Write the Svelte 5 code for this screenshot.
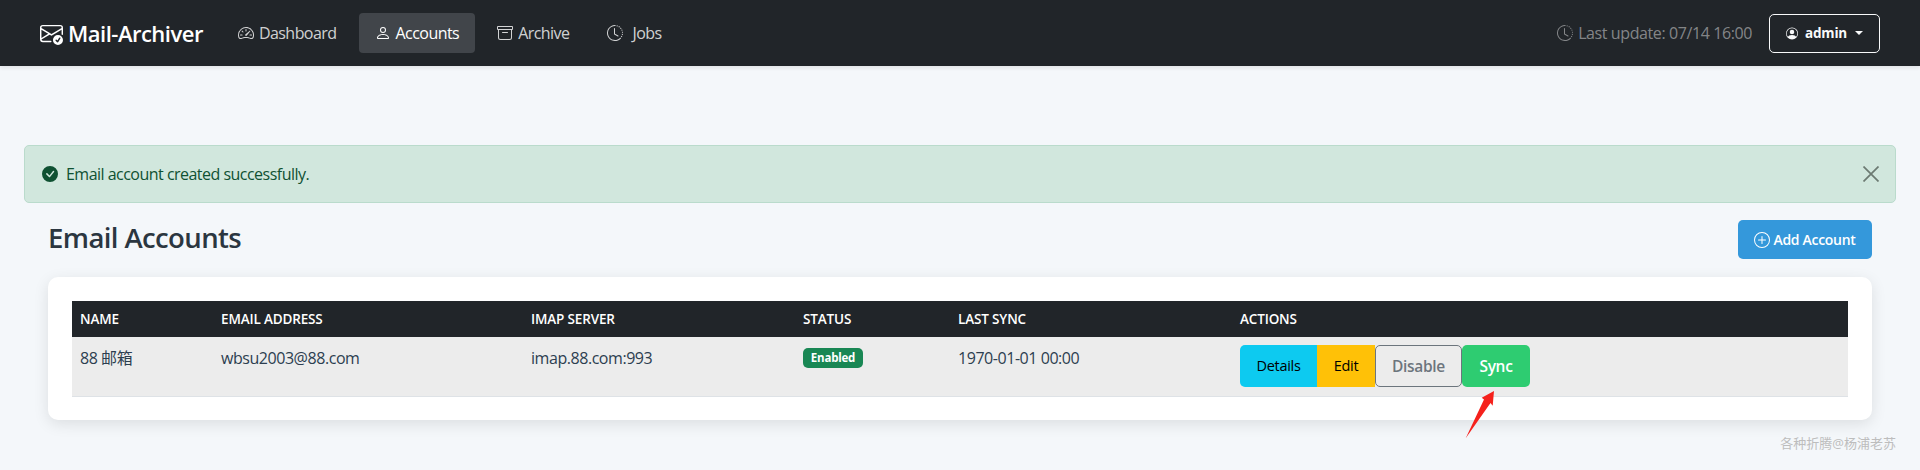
<script>
  const navItems = [
    { label: 'Dashboard', icon: 'speedometer' },
    { label: 'Accounts', icon: 'person', active: true },
    { label: 'Archive', icon: 'archive' },
    { label: 'Jobs', icon: 'clock' },
  ]

  const paths = {
    speedometer: 'M8 4a.5.5 0 0 1 .5.5V6a.5.5 0 0 1-1 0V4.5A.5.5 0 0 1 8 4zM3.732 5.732a.5.5 0 0 1 .707 0l.915.914a.5.5 0 1 1-.708.708l-.914-.915a.5.5 0 0 1 0-.707zM2 10a.5.5 0 0 1 .5-.5h1.586a.5.5 0 0 1 0 1H2.5A.5.5 0 0 1 2 10zm9.5 0a.5.5 0 0 1 .5-.5h1.5a.5.5 0 0 1 0 1H12a.5.5 0 0 1-.5-.5zm.754-4.246a.389.389 0 0 0-.527-.02L7.547 9.31a.91.91 0 1 0 1.302 1.258l3.434-4.297a.389.389 0 0 0-.029-.518zM0 10a8 8 0 1 1 15.547 2.661c-.442 1.253-1.845 1.602-2.932 1.25C11.309 13.488 9.475 13 8 13c-1.474 0-3.31.488-4.615.911-1.087.352-2.49.003-2.932-1.25A7.988 7.988 0 0 1 0 10zm8-7a7 7 0 0 0-6.603 9.329c.203.575.923.876 1.68.63C4.397 12.533 6.358 12 8 12s3.604.532 4.923.96c.757.245 1.477-.056 1.68-.631A7 7 0 0 0 8 3z',
    person: 'M8 8a3 3 0 1 0 0-6 3 3 0 0 0 0 6Zm2-3a2 2 0 1 1-4 0 2 2 0 0 1 4 0Zm4 8c0 1-1 1-1 1H3s-1 0-1-1 1-4 6-4 6 3 6 4Zm-1-.004c-.001-.246-.154-.986-.832-1.664C11.516 10.68 10.289 10 8 10c-2.29 0-3.516.68-4.168 1.332-.678.678-.83 1.418-.832 1.664h10Z',
    archive: 'M0 2a1 1 0 0 1 1-1h14a1 1 0 0 1 1 1v2a1 1 0 0 1-1 1v7.5a2.5 2.5 0 0 1-2.5 2.5h-9A2.5 2.5 0 0 1 1 12.5V5a1 1 0 0 1-1-1V2zm2 3v7.5A1.5 1.5 0 0 0 3.5 14h9a1.5 1.5 0 0 0 1.5-1.5V5H2zm13-3H1v2h14V2zM5 7.5a.5.5 0 0 1 .5-.5h5a.5.5 0 0 1 0 1h-5a.5.5 0 0 1-.5-.5z',
    clock: 'M8.515 1.019A7 7 0 0 0 8 1V0a8 8 0 0 1 .589.022l-.074.997zm2.004.45a7.003 7.003 0 0 0-.985-.299l.219-.976c.383.086.76.2 1.126.342l-.36.933zm1.37.71a7.01 7.01 0 0 0-.439-.27l.493-.87a8.025 8.025 0 0 1 .979.654l-.615.789a6.996 6.996 0 0 0-.418-.302zm1.834 1.79a6.99 6.99 0 0 0-.653-.796l.724-.69c.27.285.52.59.747.91l-.818.576zm.744 1.352a7.08 7.08 0 0 0-.214-.468l.893-.45a7.976 7.976 0 0 1 .45 1.088l-.95.313a7.023 7.023 0 0 0-.179-.483zm.53 2.507a6.991 6.991 0 0 0-.1-1.025l.985-.17c.067.386.106.778.116 1.17l-1 .025zm-.131 1.538c.033-.17.06-.339.081-.51l.993.123a7.957 7.957 0 0 1-.23 1.155l-.964-.267c.046-.165.086-.332.12-.501zm-.952 2.379c.184-.29.346-.594.486-.908l.914.405c-.16.36-.345.706-.555 1.038l-.845-.535zm-.964 1.205c.122-.122.239-.248.35-.378l.758.653a8.073 8.073 0 0 1-.401.432l-.707-.707zM8 1a7 7 0 1 0 4.95 11.95l.707.707A8.001 8.001 0 1 1 8 0v1zM7.5 3a.5.5 0 0 1 .5.5v5.21l3.248 1.856a.5.5 0 0 1-.496.868l-3.5-2A.5.5 0 0 1 7 9V3.5a.5.5 0 0 1 .5-.5z',
  }

  const columns = [
    { key: 'name', label: 'Name' },
    { key: 'email', label: 'Email Address' },
    { key: 'imap', label: 'IMAP Server' },
    { key: 'status', label: 'Status' },
    { key: 'sync', label: 'Last Sync' },
    { key: 'actions', label: 'Actions' },
  ]
</script>

<nav class="navbar">
  <a class="brand" href="#top">
    <svg class="brand-icon" viewBox="0 0 16 16" fill="currentColor">
      <path d="M2 2a2 2 0 0 0-2 2v8.01A2 2 0 0 0 2 14h5.5a.5.5 0 0 0 0-1H2a1 1 0 0 1-.966-.741l5.64-3.471L8 9.583l7-4.2V8.5a.5.5 0 0 0 1 0V4a2 2 0 0 0-2-2H2Zm3.708 6.208L1 11.105V5.383l4.708 2.825ZM1 4.217V4a1 1 0 0 1 1-1h12a1 1 0 0 1 1 1v.217l-7 4.2-7-4.2Z" />
      <path d="M16 12.5a3.5 3.5 0 1 1-7 0 3.5 3.5 0 0 1 7 0Zm-1.993-1.679a.5.5 0 0 0-.686.172l-1.17 1.95-.547-.547a.5.5 0 0 0-.708.708l.774.773a.75.75 0 0 0 1.174-.144l1.335-2.226a.5.5 0 0 0-.172-.686Z" />
    </svg>
    Mail-Archiver
  </a>
  <div class="nav-links">
    {#each navItems as item}
      <a class="nav-link" class:active={item.active} href="#top">
        <svg class="nav-icon" viewBox="0 0 16 16" fill="currentColor"><path fill-rule="evenodd" d={paths[item.icon]} /></svg>
        <span class:jobs={item.label === 'Jobs'}>{item.label}</span>
      </a>
    {/each}
  </div>
  <div class="nav-right">
    <span class="last-update">
      <svg class="nav-icon" viewBox="0 0 16 16" fill="currentColor"><path fill-rule="evenodd" d={paths.clock} /></svg>
      Last update: 07/14 16:00
    </span>
    <button class="user-btn">
      <svg class="user-icon" viewBox="0 0 16 16" fill="currentColor">
        <path d="M11 6a3 3 0 1 1-6 0 3 3 0 0 1 6 0z" />
        <path fill-rule="evenodd" d="M0 8a8 8 0 1 1 16 0A8 8 0 0 1 0 8zm8-7a7 7 0 0 0-5.468 11.37C3.242 11.226 4.805 10 8 10s4.757 1.225 5.468 2.37A7 7 0 0 0 8 1z" />
      </svg>
      <span>admin</span>
      <span class="caret"></span>
    </button>
  </div>
</nav>

<main class="page">
  <div class="alert">
    <svg class="alert-icon" viewBox="0 0 16 16" fill="currentColor">
      <path d="M16 8A8 8 0 1 1 0 8a8 8 0 0 1 16 0zm-3.97-3.03a.75.75 0 0 0-1.08.022L7.477 9.417 5.384 7.323a.75.75 0 0 0-1.06 1.06L6.97 11.03a.75.75 0 0 0 1.079-.02l3.992-4.99a.75.75 0 0 0-.01-1.05z" />
    </svg>
    <span class="alert-text">Email account created successfully.</span>
    <button class="alert-close" aria-label="Close">
      <svg viewBox="0 0 16 16" width="16" height="16" fill="none" stroke="currentColor" stroke-width="1.7"><path d="M0.5 0.5 15.5 15.5M15.5 0.5 0.5 15.5" /></svg>
    </button>
  </div>

  <div class="page-head">
    <h1>Email Accounts</h1>
    <button class="add-btn">
      <svg viewBox="0 0 16 16" width="16" height="16" fill="currentColor">
        <path d="M8 15A7 7 0 1 1 8 1a7 7 0 0 1 0 14zm0 1A8 8 0 1 0 8 0a8 8 0 0 0 0 16z" />
        <path d="M8 4a.5.5 0 0 1 .5.5v3h3a.5.5 0 0 1 0 1h-3v3a.5.5 0 0 1-1 0v-3h-3a.5.5 0 0 1 0-1h3v-3A.5.5 0 0 1 8 4z" />
      </svg>
      Add Account
    </button>
  </div>

  <section class="card">
    <table>
      <thead>
        <tr>
          {#each columns as col}
            <th class="col-{col.key}">{col.label}</th>
          {/each}
        </tr>
      </thead>
      <tbody>
        <tr>
          <td>88 邮箱</td>
          <td>wbsu2003@88.com</td>
          <td>imap.88.com:993</td>
          <td><span class="badge">Enabled</span></td>
          <td>1970-01-01 00:00</td>
          <td>
            <div class="actions">
              <button class="act act-details">Details</button>
              <button class="act act-edit">Edit</button>
              <button class="act act-disable">Disable</button>
              <button class="act act-sync">Sync</button>
            </div>
          </td>
        </tr>
      </tbody>
    </table>
    <!-- red annotation arrow drawn on top of the card -->
    <svg class="arrow" viewBox="0 0 30 48" width="30" height="48"><path d="M.7 47.3 19 8.5 16.7 6.7 29 0 27.7 14.7 25.5 12Z" fill="#f5211c" /></svg>
  </section>
</main>

<div class="watermark">各种折腾@杨浦老苏</div>

<style>
  :global(body) {
    margin: 0;
    background: #f4f7fa;
    color: #2c3e50;
    font-family: "Open Sans", "Noto Sans CJK SC", sans-serif;
    font-size: 16px;
    overflow: hidden;
  }
  a { text-decoration: none; color: inherit; }
  button { font: inherit; cursor: pointer; }

  .navbar {
    display: flex;
    align-items: center;
    height: 66px;
    padding: 0 40px;
    box-sizing: border-box;
    background: #212529;
    box-shadow: 0 2px 4px rgba(0, 0, 0, 0.08);
  }
  .brand {
    display: flex;
    align-items: center;
    gap: 5px;
    color: #fff;
    font-size: 22px;
    font-weight: 600;
    letter-spacing: -0.5px;
    margin-right: 19px;
  }
  .brand-icon { width: 23px; height: 23px; }
  .nav-links { display: flex; align-items: center; gap: 6px; }
  .nav-link {
    display: flex;
    align-items: center;
    gap: 5px;
    height: 40px;
    padding: 0 16px;
    border-radius: 4px;
    color: rgba(255, 255, 255, 0.8);
    font-size: 16px;
    letter-spacing: -0.55px;
  }
  .nav-link.active { background: #41454a; color: #fff; }
  .nav-icon { width: 16px; height: 16px; flex-shrink: 0; }
  .jobs { margin-left: 4px; }
  .nav-right { display: flex; align-items: center; margin-left: auto; gap: 17px; }
  .last-update {
    display: flex;
    align-items: center;
    gap: 5px;
    color: rgba(255, 255, 255, 0.45);
    font-size: 16px;
    letter-spacing: -0.4px;
  }
  .user-btn {
    display: flex;
    align-items: center;
    width: 111px;
    height: 39px;
    padding: 0 16px;
    box-sizing: border-box;
    background: none;
    border: 1px solid #f8f9fa;
    border-radius: 5px;
    color: #f8f9fa;
    font-size: 13.5px;
    font-weight: 700;
    letter-spacing: -0.2px;
  }
  .user-icon { width: 15px; height: 15px; margin-right: 7px; }
  .caret {
    margin-left: 8px;
    border-top: 4.5px solid currentColor;
    border-left: 4.5px solid transparent;
    border-right: 4.5px solid transparent;
  }

  .page { padding: 79px 0 50px; }
  .alert {
    display: flex;
    align-items: center;
    margin: 0 24px;
    height: 58px;
    padding: 0 17px;
    box-sizing: border-box;
    background: #d1e7dd;
    border: 1px solid #badbcc;
    border-radius: 5px;
    color: #0f5132;
  }
  .alert-icon { width: 16px; height: 16px; margin-right: 8px; }
  .alert-text { font-size: 16px; letter-spacing: -0.52px; }
  .alert-close {
    margin-left: auto;
    margin-right: -1px;
    padding: 0;
    display: flex;
    background: none;
    border: none;
    color: #6c7a72;
  }
  .page-head {
    display: flex;
    justify-content: space-between;
    margin: 17px 48px 18px;
    height: 39px;
  }
  h1 {
    margin: 0;
    font-size: 27.5px;
    font-weight: 600;
    letter-spacing: -0.6px;
    line-height: 36px;
    color: #2b3640;
  }
  .add-btn {
    display: flex;
    align-items: center;
    justify-content: center;
    gap: 3px;
    width: 134px;
    height: 39px;
    padding: 0;
    background: #3498db;
    border: none;
    border-radius: 5px;
    color: #fff;
    font-size: 14px;
    font-weight: 600;
    letter-spacing: -0.3px;
  }

  .card {
    position: relative;
    margin: 0 48px;
    height: 143px;
    padding: 24px 24px 0;
    box-sizing: border-box;
    background: #fff;
    border-radius: 10px;
    box-shadow: 0 4px 15px rgba(0, 0, 0, 0.1);
  }
  table {
    width: 100%;
    border-collapse: collapse;
    table-layout: fixed;
  }
  th {
    height: 36px;
    padding: 0 8px;
    box-sizing: border-box;
    background: #212529;
    color: #fff;
    font-size: 13.5px;
    font-weight: 600;
    letter-spacing: -0.15px;
    text-align: left;
    text-transform: uppercase;
  }
  .col-name { width: 141px; }
  .col-email { width: 310px; }
  .col-imap { width: 272px; }
  .col-status { width: 155px; }
  .col-sync { width: 282px; }
  td {
    height: 59px;
    padding: 8px 8px 0;
    box-sizing: border-box;
    vertical-align: top;
    background: #ececec;
    border-bottom: 1px solid #dee2e6;
    font-size: 16px;
    letter-spacing: -0.45px;
    line-height: 26px;
  }
  .badge {
    display: inline-block;
    width: 60px;
    height: 20px;
    margin-top: 3px;
    background: #198754;
    border-radius: 5px;
    color: #fff;
    font-size: 11.5px;
    font-weight: 700;
    letter-spacing: -0.2px;
    line-height: 20px;
    text-align: center;
    vertical-align: top;
  }
  .actions { display: flex; }
  .act {
    height: 42px;
    padding: 0;
    box-sizing: border-box;
    border: none;
    font-size: 14.5px;
    font-weight: 500;
    letter-spacing: -0.3px;
  }
  .act-details { width: 77px; background: #0dcaf0; color: #000; border-radius: 5px 0 0 5px; }
  .act-edit { width: 58px; background: #ffc107; color: #000; }
  .act-disable {
    width: 87px;
    background: transparent;
    border: 1px solid #6c757d;
    border-radius: 5px;
    color: #6c757d;
    font-size: 15.5px;
    font-weight: 600;
  }
  .act-sync {
    width: 68px;
    background: #2ecc71;
    border-radius: 5px;
    color: #fff;
    font-size: 15.5px;
    font-weight: 600;
  }
  .arrow { position: absolute; left: 1417px; top: 114px; z-index: 2; }

  .watermark {
    position: absolute;
    right: 24px;
    top: 434px;
    color: #bdbdbd;
    font-size: 13px;
    line-height: 18px;
    white-space: nowrap;
  }
</style>
